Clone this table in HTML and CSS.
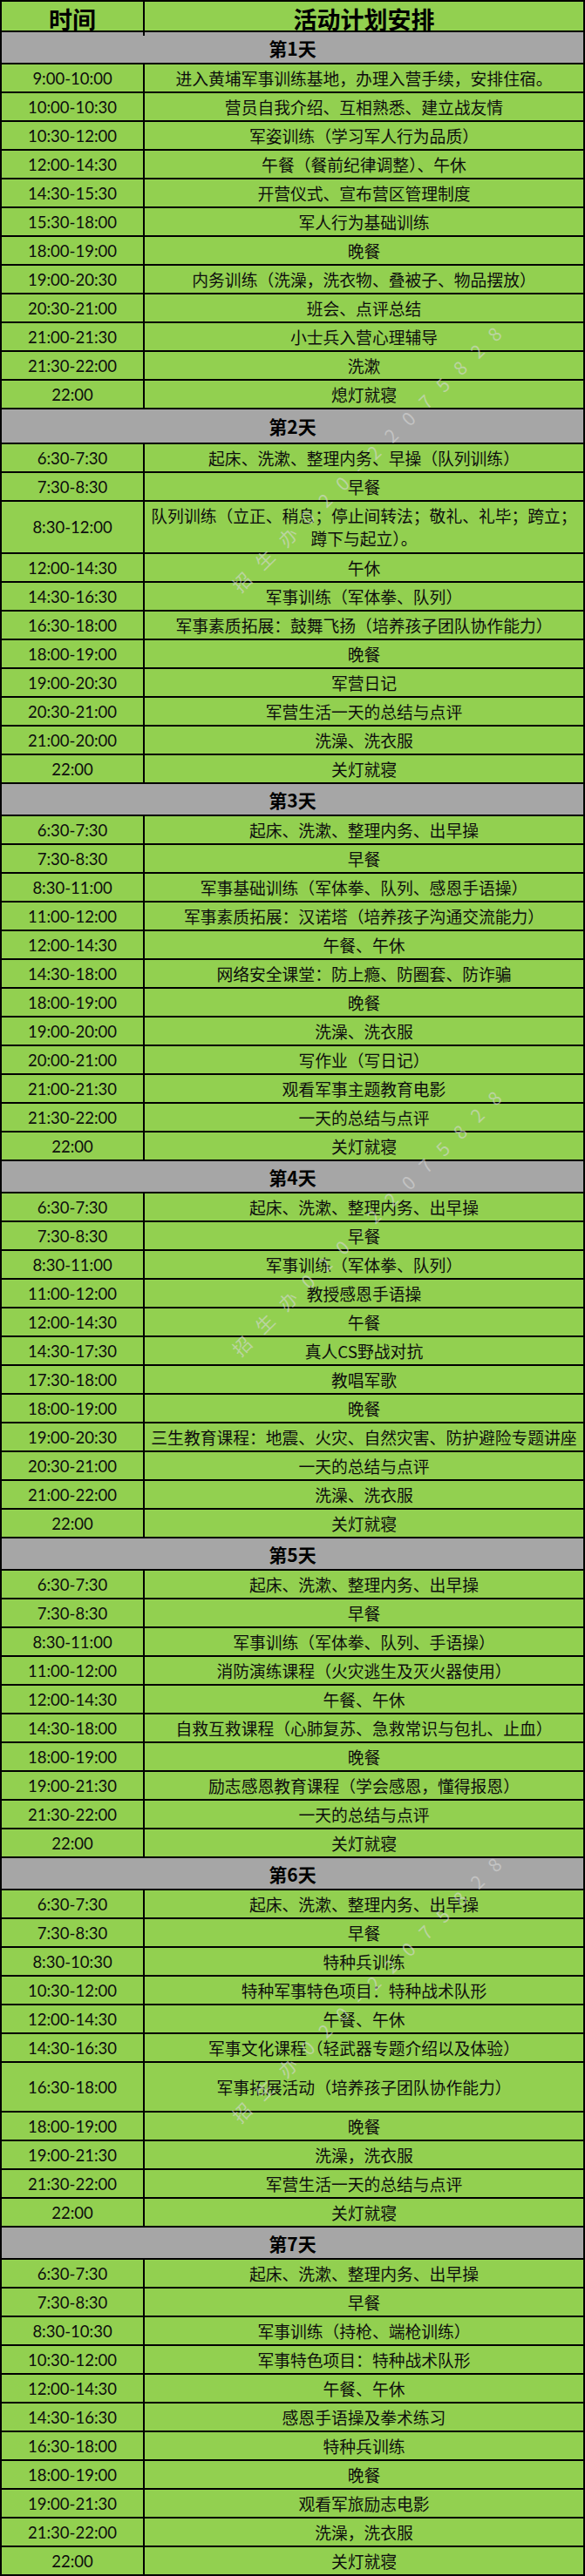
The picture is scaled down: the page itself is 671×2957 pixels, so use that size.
FILE: index.html
```html
<!DOCTYPE html>
<html lang="zh-CN">
<head>
<meta charset="utf-8">
<title>活动计划安排</title>
<link rel="stylesheet" href="styles.css">
</head>
<body>
<div class="sheet">
  <div class="row head"><div class="t">时间</div><div class="c">活动计划安排</div></div>

  <div class="day">第1天</div>
  <div class="row"><div class="t">9:00-10:00</div><div class="c">进入黄埔军事训练基地，办理入营手续，安排住宿。</div></div>
  <div class="row"><div class="t">10:00-10:30</div><div class="c">营员自我介绍、互相熟悉、建立战友情</div></div>
  <div class="row"><div class="t">10:30-12:00</div><div class="c">军姿训练（学习军人行为品质）</div></div>
  <div class="row"><div class="t">12:00-14:30</div><div class="c">午餐（餐前纪律调整）、午休</div></div>
  <div class="row"><div class="t">14:30-15:30</div><div class="c">开营仪式、宣布营区管理制度</div></div>
  <div class="row"><div class="t">15:30-18:00</div><div class="c">军人行为基础训练</div></div>
  <div class="row"><div class="t">18:00-19:00</div><div class="c">晚餐</div></div>
  <div class="row"><div class="t">19:00-20:30</div><div class="c">内务训练（洗澡，洗衣物、叠被子、物品摆放）</div></div>
  <div class="row"><div class="t">20:30-21:00</div><div class="c">班会、点评总结</div></div>
  <div class="row"><div class="t">21:00-21:30</div><div class="c">小士兵入营心理辅导</div></div>
  <div class="row"><div class="t">21:30-22:00</div><div class="c">洗漱</div></div>
  <div class="row"><div class="t">22:00</div><div class="c">熄灯就寝</div></div>

  <div class="day day-2">第2天</div>
  <div class="row"><div class="t">6:30-7:30</div><div class="c">起床、洗漱、整理内务、早操（队列训练）</div></div>
  <div class="row"><div class="t">7:30-8:30</div><div class="c">早餐</div></div>
  <div class="row double"><div class="t">8:30-12:00</div><div class="c">队列训练（立正、稍息；停止间转法；敬礼、礼毕；跨立；蹲下与起立）。</div></div>
  <div class="row"><div class="t">12:00-14:30</div><div class="c">午休</div></div>
  <div class="row"><div class="t">14:30-16:30</div><div class="c">军事训练（军体拳、队列）</div></div>
  <div class="row"><div class="t">16:30-18:00</div><div class="c">军事素质拓展：鼓舞飞扬（培养孩子团队协作能力）</div></div>
  <div class="row"><div class="t">18:00-19:00</div><div class="c">晚餐</div></div>
  <div class="row"><div class="t">19:00-20:30</div><div class="c">军营日记</div></div>
  <div class="row"><div class="t">20:30-21:00</div><div class="c">军营生活一天的总结与点评</div></div>
  <div class="row"><div class="t">21:00-20:00</div><div class="c">洗澡、洗衣服</div></div>
  <div class="row"><div class="t">22:00</div><div class="c">关灯就寝</div></div>

  <div class="day">第3天</div>
  <div class="row"><div class="t">6:30-7:30</div><div class="c">起床、洗漱、整理内务、出早操</div></div>
  <div class="row"><div class="t">7:30-8:30</div><div class="c">早餐</div></div>
  <div class="row"><div class="t">8:30-11:00</div><div class="c">军事基础训练（军体拳、队列、感恩手语操）</div></div>
  <div class="row"><div class="t">11:00-12:00</div><div class="c">军事素质拓展：汉诺塔（培养孩子沟通交流能力）</div></div>
  <div class="row"><div class="t">12:00-14:30</div><div class="c">午餐、午休</div></div>
  <div class="row"><div class="t">14:30-18:00</div><div class="c">网络安全课堂：防上瘾、防圈套、防诈骗</div></div>
  <div class="row"><div class="t">18:00-19:00</div><div class="c">晚餐</div></div>
  <div class="row"><div class="t">19:00-20:00</div><div class="c">洗澡、洗衣服</div></div>
  <div class="row"><div class="t">20:00-21:00</div><div class="c">写作业（写日记）</div></div>
  <div class="row"><div class="t">21:00-21:30</div><div class="c">观看军事主题教育电影</div></div>
  <div class="row"><div class="t">21:30-22:00</div><div class="c">一天的总结与点评</div></div>
  <div class="row"><div class="t">22:00</div><div class="c">关灯就寝</div></div>

  <div class="day">第4天</div>
  <div class="row"><div class="t">6:30-7:30</div><div class="c">起床、洗漱、整理内务、出早操</div></div>
  <div class="row"><div class="t">7:30-8:30</div><div class="c">早餐</div></div>
  <div class="row"><div class="t">8:30-11:00</div><div class="c">军事训练（军体拳、队列）</div></div>
  <div class="row"><div class="t">11:00-12:00</div><div class="c">教授感恩手语操</div></div>
  <div class="row"><div class="t">12:00-14:30</div><div class="c">午餐</div></div>
  <div class="row"><div class="t">14:30-17:30</div><div class="c">真人CS野战对抗</div></div>
  <div class="row"><div class="t">17:30-18:00</div><div class="c">教唱军歌</div></div>
  <div class="row"><div class="t">18:00-19:00</div><div class="c">晚餐</div></div>
  <div class="row"><div class="t">19:00-20:30</div><div class="c">三生教育课程：地震、火灾、自然灾害、防护避险专题讲座</div></div>
  <div class="row"><div class="t">20:30-21:00</div><div class="c">一天的总结与点评</div></div>
  <div class="row"><div class="t">21:00-22:00</div><div class="c">洗澡、洗衣服</div></div>
  <div class="row"><div class="t">22:00</div><div class="c">关灯就寝</div></div>

  <div class="day">第5天</div>
  <div class="row"><div class="t">6:30-7:30</div><div class="c">起床、洗漱、整理内务、出早操</div></div>
  <div class="row"><div class="t">7:30-8:30</div><div class="c">早餐</div></div>
  <div class="row"><div class="t">8:30-11:00</div><div class="c">军事训练（军体拳、队列、手语操）</div></div>
  <div class="row"><div class="t">11:00-12:00</div><div class="c">消防演练课程（火灾逃生及灭火器使用）</div></div>
  <div class="row"><div class="t">12:00-14:30</div><div class="c">午餐、午休</div></div>
  <div class="row"><div class="t">14:30-18:00</div><div class="c">自救互救课程（心肺复苏、急救常识与包扎、止血）</div></div>
  <div class="row"><div class="t">18:00-19:00</div><div class="c">晚餐</div></div>
  <div class="row"><div class="t">19:00-21:30</div><div class="c">励志感恩教育课程（学会感恩，懂得报恩）</div></div>
  <div class="row"><div class="t">21:30-22:00</div><div class="c">一天的总结与点评</div></div>
  <div class="row"><div class="t">22:00</div><div class="c">关灯就寝</div></div>

  <div class="day">第6天</div>
  <div class="row"><div class="t">6:30-7:30</div><div class="c">起床、洗漱、整理内务、出早操</div></div>
  <div class="row"><div class="t">7:30-8:30</div><div class="c">早餐</div></div>
  <div class="row"><div class="t">8:30-10:30</div><div class="c">特种兵训练</div></div>
  <div class="row"><div class="t">10:30-12:00</div><div class="c">特种军事特色项目：特种战术队形</div></div>
  <div class="row"><div class="t">12:00-14:30</div><div class="c">午餐、午休</div></div>
  <div class="row"><div class="t">14:30-16:30</div><div class="c">军事文化课程（轻武器专题介绍以及体验）</div></div>
  <div class="row tall"><div class="t">16:30-18:00</div><div class="c">军事拓展活动（培养孩子团队协作能力）</div></div>
  <div class="row"><div class="t">18:00-19:00</div><div class="c">晚餐</div></div>
  <div class="row"><div class="t">19:00-21:30</div><div class="c">洗澡，洗衣服</div></div>
  <div class="row"><div class="t">21:30-22:00</div><div class="c">军营生活一天的总结与点评</div></div>
  <div class="row"><div class="t">22:00</div><div class="c">关灯就寝</div></div>

  <div class="day">第7天</div>
  <div class="row"><div class="t">6:30-7:30</div><div class="c">起床、洗漱、整理内务、出早操</div></div>
  <div class="row"><div class="t">7:30-8:30</div><div class="c">早餐</div></div>
  <div class="row"><div class="t">8:30-10:30</div><div class="c">军事训练（持枪、端枪训练）</div></div>
  <div class="row"><div class="t">10:30-12:00</div><div class="c">军事特色项目：特种战术队形</div></div>
  <div class="row"><div class="t">12:00-14:30</div><div class="c">午餐、午休</div></div>
  <div class="row"><div class="t">14:30-16:30</div><div class="c">感恩手语操及拳术练习</div></div>
  <div class="row"><div class="t">16:30-18:00</div><div class="c">特种兵训练</div></div>
  <div class="row"><div class="t">18:00-19:00</div><div class="c">晚餐</div></div>
  <div class="row"><div class="t">19:00-21:30</div><div class="c">观看军旅励志电影</div></div>
  <div class="row"><div class="t">21:30-22:00</div><div class="c">洗澡，洗衣服</div></div>
  <div class="row"><div class="t">22:00</div><div class="c">关灯就寝</div></div>

  <div class="mark mark-1">招生办020-22075828</div>
  <div class="mark mark-2">招生办020-22075828</div>
  <div class="mark mark-3">招生办020-22075828</div>
</div>
</body>
</html>
```

FILE: styles.css
```css
html, body {
  margin: 0;
  padding: 0;
  background: #ffffff;
}

.sheet {
  position: relative;
  width: 671px;
  box-sizing: border-box;
  border: 2px solid #000;
  border-bottom: 0;
  background: #92d050;
  color: #0d0d0d;
  overflow: hidden;
}

.row {
  display: grid;
  grid-template-columns: 164px 1fr;
  height: 33px;
  box-sizing: border-box;
  border-bottom: 2px solid #000;
}

.row.double { height: 60px; }
.row.tall { height: 57px; }

.t {
  display: flex;
  align-items: center;
  justify-content: center;
  border-right: 2px solid #000;
  font-family: Lato, "Liberation Sans", sans-serif;
  font-size: 18.5px;
}

.c {
  display: flex;
  align-items: center;
  justify-content: center;
  text-align: center;
  padding: 0 2px;
  font-family: "Noto Sans CJK SC", "Noto Sans", sans-serif;
  font-size: 18.8px;
  line-height: 26px;
}

.head { height: 35px; }
.head .t,
.head .c {
  font-family: "Noto Sans CJK SC", sans-serif;
  font-weight: 700;
  font-size: 27px;
  color: #000;
}

.day {
  display: flex;
  align-items: center;
  justify-content: center;
  height: 37px;
  box-sizing: border-box;
  border-bottom: 2px solid #000;
  background: #a6a6a6;
  font-family: "Noto Sans CJK SC", sans-serif;
  font-weight: 700;
  font-size: 21px;
  color: #000;
}

.day.day-2 { height: 40px; }

.mark {
  position: absolute;
  left: 418px;
  white-space: nowrap;
  transform: translate(-50%, -50%) rotate(-44.5deg);
  font-family: "Noto Sans CJK SC", sans-serif;
  font-size: 21px;
  letter-spacing: 16px;
  text-indent: 16px;
  color: rgba(215, 215, 215, 0.6);
  pointer-events: none;
}

.mark-1 { top: 525px; }
.mark-2 { top: 1402px; }
.mark-3 { top: 2282px; }
```
